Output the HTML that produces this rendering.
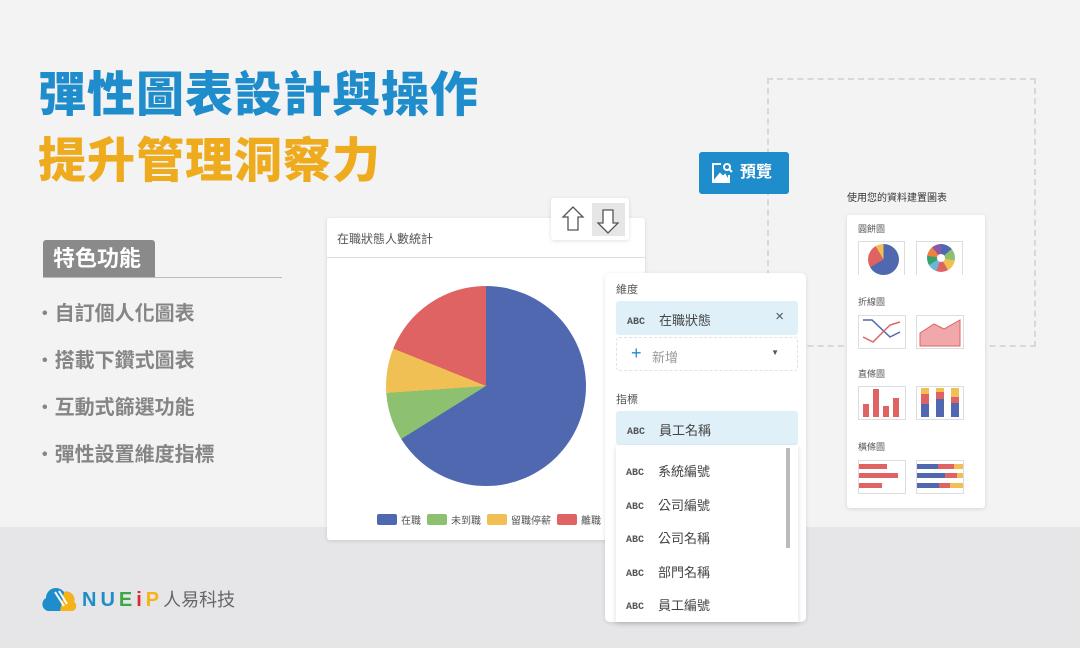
<!DOCTYPE html>
<html><head><meta charset="utf-8"><style>
*{margin:0;padding:0;box-sizing:border-box}
body{width:1080px;height:648px;overflow:hidden;background:#f3f3f3;font-family:"Liberation Sans","Noto Sans CJK TC",sans-serif;position:relative}
.abs{position:absolute}
.band{left:0;top:527px;width:1080px;height:121px;background:#e6e6e8}
.t1{left:38px;top:66px;font-size:48px;font-weight:900;color:#1f8ccb;letter-spacing:1px;white-space:nowrap;line-height:60px}
.t2{left:38px;top:132px;font-size:48px;font-weight:900;color:#eeab1e;letter-spacing:1px;white-space:nowrap;line-height:60px}
.tag{left:43px;top:240px;width:112px;height:38px;background:#8a8a8a;border-radius:3px 3px 0 0;color:#fff;font-size:22px;font-weight:700;line-height:38px;padding-left:10px}
.tagline{left:43px;top:277px;width:239px;height:1px;background:#bbb}
.li{left:42px;font-size:20px;font-weight:700;color:#858585;white-space:nowrap}
.li:before{content:"•";margin-right:7px;font-size:16px;vertical-align:2px}
.card{background:#fff;box-shadow:0 1px 4px rgba(0,0,0,.12);border-radius:3px}
.abc{font-family:"Liberation Mono",monospace;font-size:10px;font-weight:700;color:#555;display:inline-block;width:32px;vertical-align:1px}
.row{position:absolute;left:20px;font-size:13px;color:#444}
</style></head><body>
<div class="abs band"></div>
<div class="abs" style="left:767px;top:78px;width:269px;height:269px;border:2px dashed #d8d8d8"></div>

<div class="abs t1">彈性圖表設計與操作</div>
<div class="abs t2">提升管理洞察力</div>
<div class="abs tag">特色功能</div>
<div class="abs tagline"></div>
<div class="abs li" style="top:297px">自訂個人化圖表</div>
<div class="abs li" style="top:344px">搭載下鑽式圖表</div>
<div class="abs li" style="top:391px">互動式篩選功能</div>
<div class="abs li" style="top:438px">彈性設置維度指標</div>

<!-- chart card -->
<div class="abs card" style="left:327px;top:218px;width:318px;height:322px">
  <div style="position:absolute;left:10px;top:12px;font-size:12px;color:#555">在職狀態人數統計</div>
  <div style="position:absolute;left:0;top:39px;width:318px;height:1px;background:#ddd"></div>
  <div style="position:absolute;left:59px;top:68px;width:200px;height:200px;border-radius:50%;background:conic-gradient(#4f68b0 0 238deg,#8dc170 238deg 266deg,#f0c055 266deg 292deg,#e06363 292deg 360deg)"></div>
  <div style="position:absolute;left:50px;top:294px;font-size:10px;color:#555;white-space:nowrap;display:flex;align-items:center">
    <span style="width:20px;height:11px;background:#4f68b0;border-radius:2px;margin-right:4px"></span>在職
    <span style="width:20px;height:11px;background:#8dc170;border-radius:2px;margin:0 4px 0 6px"></span>未到職
    <span style="width:20px;height:11px;background:#f0c055;border-radius:2px;margin:0 4px 0 6px"></span>留職停薪
    <span style="width:20px;height:11px;background:#e06363;border-radius:2px;margin:0 4px 0 6px"></span>離職
  </div>
</div>

<!-- arrows -->
<div class="abs card" style="left:551px;top:198px;width:78px;height:42px">
  <svg width="78" height="42" style="position:absolute;left:0;top:0">
    <rect x="41" y="5" width="33" height="33" fill="#e6e6e6"/>
    <path d="M22 9 L12 19 L17 19 L17 32 L27 32 L27 19 L32 19 Z" fill="#fff" stroke="#555" stroke-width="1.3"/>
    <path d="M57 35 L47 25 L52 25 L52 12 L62 12 L62 25 L67 25 Z" fill="#fff" stroke="#555" stroke-width="1.3"/>
  </svg>
</div>

<!-- preview button -->
<div class="abs" style="left:699px;top:152px;width:90px;height:42px;background:#1f8ccb;border-radius:3px;color:#fff;font-size:16px;font-weight:700;line-height:42px">
  <svg width="24" height="24" style="position:absolute;left:11px;top:9px" viewBox="0 0 24 24" fill="none" stroke="#fff" stroke-width="2"><path d="M11 3 H3 V21 H19 V14"/><path d="M5 19 L10 13 L13 16 L15 14 L18 19 Z" fill="#fff"/><circle cx="17" cy="6" r="3"/><path d="M19 8 L22 11"/></svg>
  <span style="position:absolute;left:41px">預覽</span>
</div>

<!-- dimension panel -->
<div class="abs card" style="left:605px;top:273px;width:201px;height:349px;border-radius:5px">
  <div style="position:absolute;left:11px;top:8px;font-size:11px;color:#555">維度</div>
  <div style="position:absolute;left:11px;top:28px;width:182px;height:34px;background:#dff0f8;border-radius:3px"><div class="row" style="left:11px;top:9px"><span class="abc">ABC</span>在職狀態</div><span style="position:absolute;right:14px;top:7px;font-size:15px;color:#555">×</span></div>
  <div style="position:absolute;left:11px;top:64px;width:182px;height:34px;border:1px dashed #e2e2e2;border-radius:3px"><span style="position:absolute;left:14px;top:5px;font-size:18px;color:#1f8ccb">+</span><span style="position:absolute;left:35px;top:9px;font-size:13px;color:#999">新增</span><span style="position:absolute;right:18px;top:10px;font-size:8px;color:#555">▼</span></div>
  <div style="position:absolute;left:11px;top:118px;font-size:11px;color:#555">指標</div>
  <div style="position:absolute;left:11px;top:138px;width:182px;height:34px;background:#dff0f8;border-radius:3px"><div class="row" style="left:11px;top:9px"><span class="abc">ABC</span>員工名稱</div></div>
  <div style="position:absolute;left:11px;top:172px;width:182px;height:177px;background:#fff;box-shadow:0 2px 5px rgba(0,0,0,.15)">
    <div style="position:absolute;right:8px;top:3px;width:4px;height:100px;background:#bbb"></div>
    <div class="row" style="left:10px;top:16px"><span class="abc">ABC</span>系統編號</div>
    <div class="row" style="left:10px;top:50px"><span class="abc">ABC</span>公司編號</div>
    <div class="row" style="left:10px;top:83px"><span class="abc">ABC</span>公司名稱</div>
    <div class="row" style="left:10px;top:117px"><span class="abc">ABC</span>部門名稱</div>
    <div class="row" style="left:10px;top:150px"><span class="abc">ABC</span>員工編號</div>
  </div>
</div>

<!-- chart types -->
<div class="abs" style="left:847px;top:189px;font-size:10px;color:#333">使用您的資料建置圖表</div>
<div class="abs card" style="left:847px;top:215px;width:138px;height:293px">
  <div style="position:absolute;left:11px;top:7px;font-size:9px;color:#555">圓餅圖</div>
  <div style="position:absolute;left:11px;top:26px;width:47px;height:34px;border:1px solid #ddd;border-bottom:none"><div style="position:absolute;left:9px;top:2px;width:31px;height:31px;border-radius:50%;background:conic-gradient(#4f68b0 0 240deg,#e06363 240deg 330deg,#f0c055 330deg 360deg)"></div></div>
  <div style="position:absolute;left:69px;top:26px;width:47px;height:34px;border:1px solid #ddd;border-bottom:none"><div style="position:absolute;left:10px;top:2px;width:28px;height:28px;border-radius:50%;background:conic-gradient(#4f68b0 0 50deg,#8dc170 50deg 100deg,#f0c055 100deg 150deg,#e06363 150deg 200deg,#6ab8d8 200deg 240deg,#3aa070 240deg 280deg,#f08040 280deg 320deg,#8a5aa8 320deg 360deg)"><div style="position:absolute;left:10px;top:10px;width:8px;height:8px;border-radius:50%;background:#fff"></div></div></div>
  <div style="position:absolute;left:11px;top:80px;font-size:9px;color:#555">折線圖</div>
  <svg style="position:absolute;left:11px;top:100px" width="110" height="35"><rect x=".5" y=".5" width="47" height="33" fill="#fff" stroke="#ddd"/><rect x="58.5" y=".5" width="47" height="33" fill="#fff" stroke="#ddd"/><path d="M5 5H14L32 22L42 17" stroke="#4f68b0" fill="none" stroke-width="1.5"/><path d="M5 22L15 27L32 10L42 7" stroke="#e06363" fill="none" stroke-width="1.5"/><path d="M62 18L76 9L86 14L102 5V31H62Z" fill="#f0a8aa" stroke="#e06363"/></svg>
  <div style="position:absolute;left:11px;top:152px;font-size:9px;color:#555">直條圖</div>
  <svg style="position:absolute;left:11px;top:171px" width="110" height="35"><rect x=".5" y=".5" width="47" height="33" fill="#fff" stroke="#ddd"/><rect x="58.5" y=".5" width="47" height="33" fill="#fff" stroke="#ddd"/><g fill="#e06363"><rect x="5" y="18" width="6" height="13"/><rect x="15" y="3" width="6" height="28"/><rect x="25" y="20" width="6" height="11"/><rect x="35" y="12" width="6" height="19"/></g><g><rect x="63" y="18" width="8" height="13" fill="#4f68b0"/><rect x="63" y="8" width="8" height="10" fill="#e06363"/><rect x="63" y="2" width="8" height="6" fill="#f0c055"/><rect x="78" y="13" width="8" height="18" fill="#4f68b0"/><rect x="78" y="6" width="8" height="7" fill="#e06363"/><rect x="78" y="2" width="8" height="4" fill="#f0c055"/><rect x="93" y="17" width="8" height="14" fill="#4f68b0"/><rect x="93" y="11" width="8" height="6" fill="#e06363"/><rect x="93" y="2" width="8" height="9" fill="#f0c055"/></g></svg>
  <div style="position:absolute;left:11px;top:225px;font-size:9px;color:#555">橫條圖</div>
  <svg style="position:absolute;left:11px;top:245px" width="110" height="35"><rect x=".5" y=".5" width="47" height="33" fill="#fff" stroke="#ddd"/><rect x="58.5" y=".5" width="47" height="33" fill="#fff" stroke="#ddd"/><g fill="#e06363"><rect x="1" y="4" width="28" height="5"/><rect x="1" y="13" width="39" height="5"/><rect x="1" y="23" width="23" height="5"/></g><rect x="59" y="4" width="21" height="5" fill="#4f68b0"/><rect x="80" y="4" width="16" height="5" fill="#e06363"/><rect x="96" y="4" width="9" height="5" fill="#f0c055"/><rect x="59" y="13" width="28" height="5" fill="#4f68b0"/><rect x="87" y="13" width="12" height="5" fill="#e06363"/><rect x="99" y="13" width="6" height="5" fill="#f0c055"/><rect x="59" y="23" width="22" height="5" fill="#4f68b0"/><rect x="81" y="23" width="11" height="5" fill="#e06363"/><rect x="92" y="23" width="13" height="5" fill="#f0c055"/></svg>
</div>

<!-- logo -->
<svg class="abs" style="left:40px;top:584px" width="40" height="30" viewBox="0 0 40 30"><path d="M8 27 A7 7 0 0 1 6 14 A10 10 0 0 1 24 8 A8 8 0 0 1 34 18 A5 5 0 0 1 32 27 Z" fill="#1f8ccb"/><path d="M20 27 L32 27 A5 5 0 0 0 34 18 A8 8 0 0 0 24 8 Z" fill="#f5b317"/><path d="M15 8 L24 22 M19 7 L27 20" stroke="#fff" stroke-width="2" fill="none"/></svg>
<div class="abs" style="left:82px;top:589px;font-size:20px;font-weight:700;letter-spacing:4px;white-space:nowrap;line-height:22px"><span style="color:#1f8ccb">NU</span><span style="color:#3aa845">E</span><span style="color:#e0262e">i</span><span style="color:#f5b317">P</span><span style="color:#666;font-weight:400;font-size:18px;letter-spacing:0">人易科技</span></div>
</body></html>
